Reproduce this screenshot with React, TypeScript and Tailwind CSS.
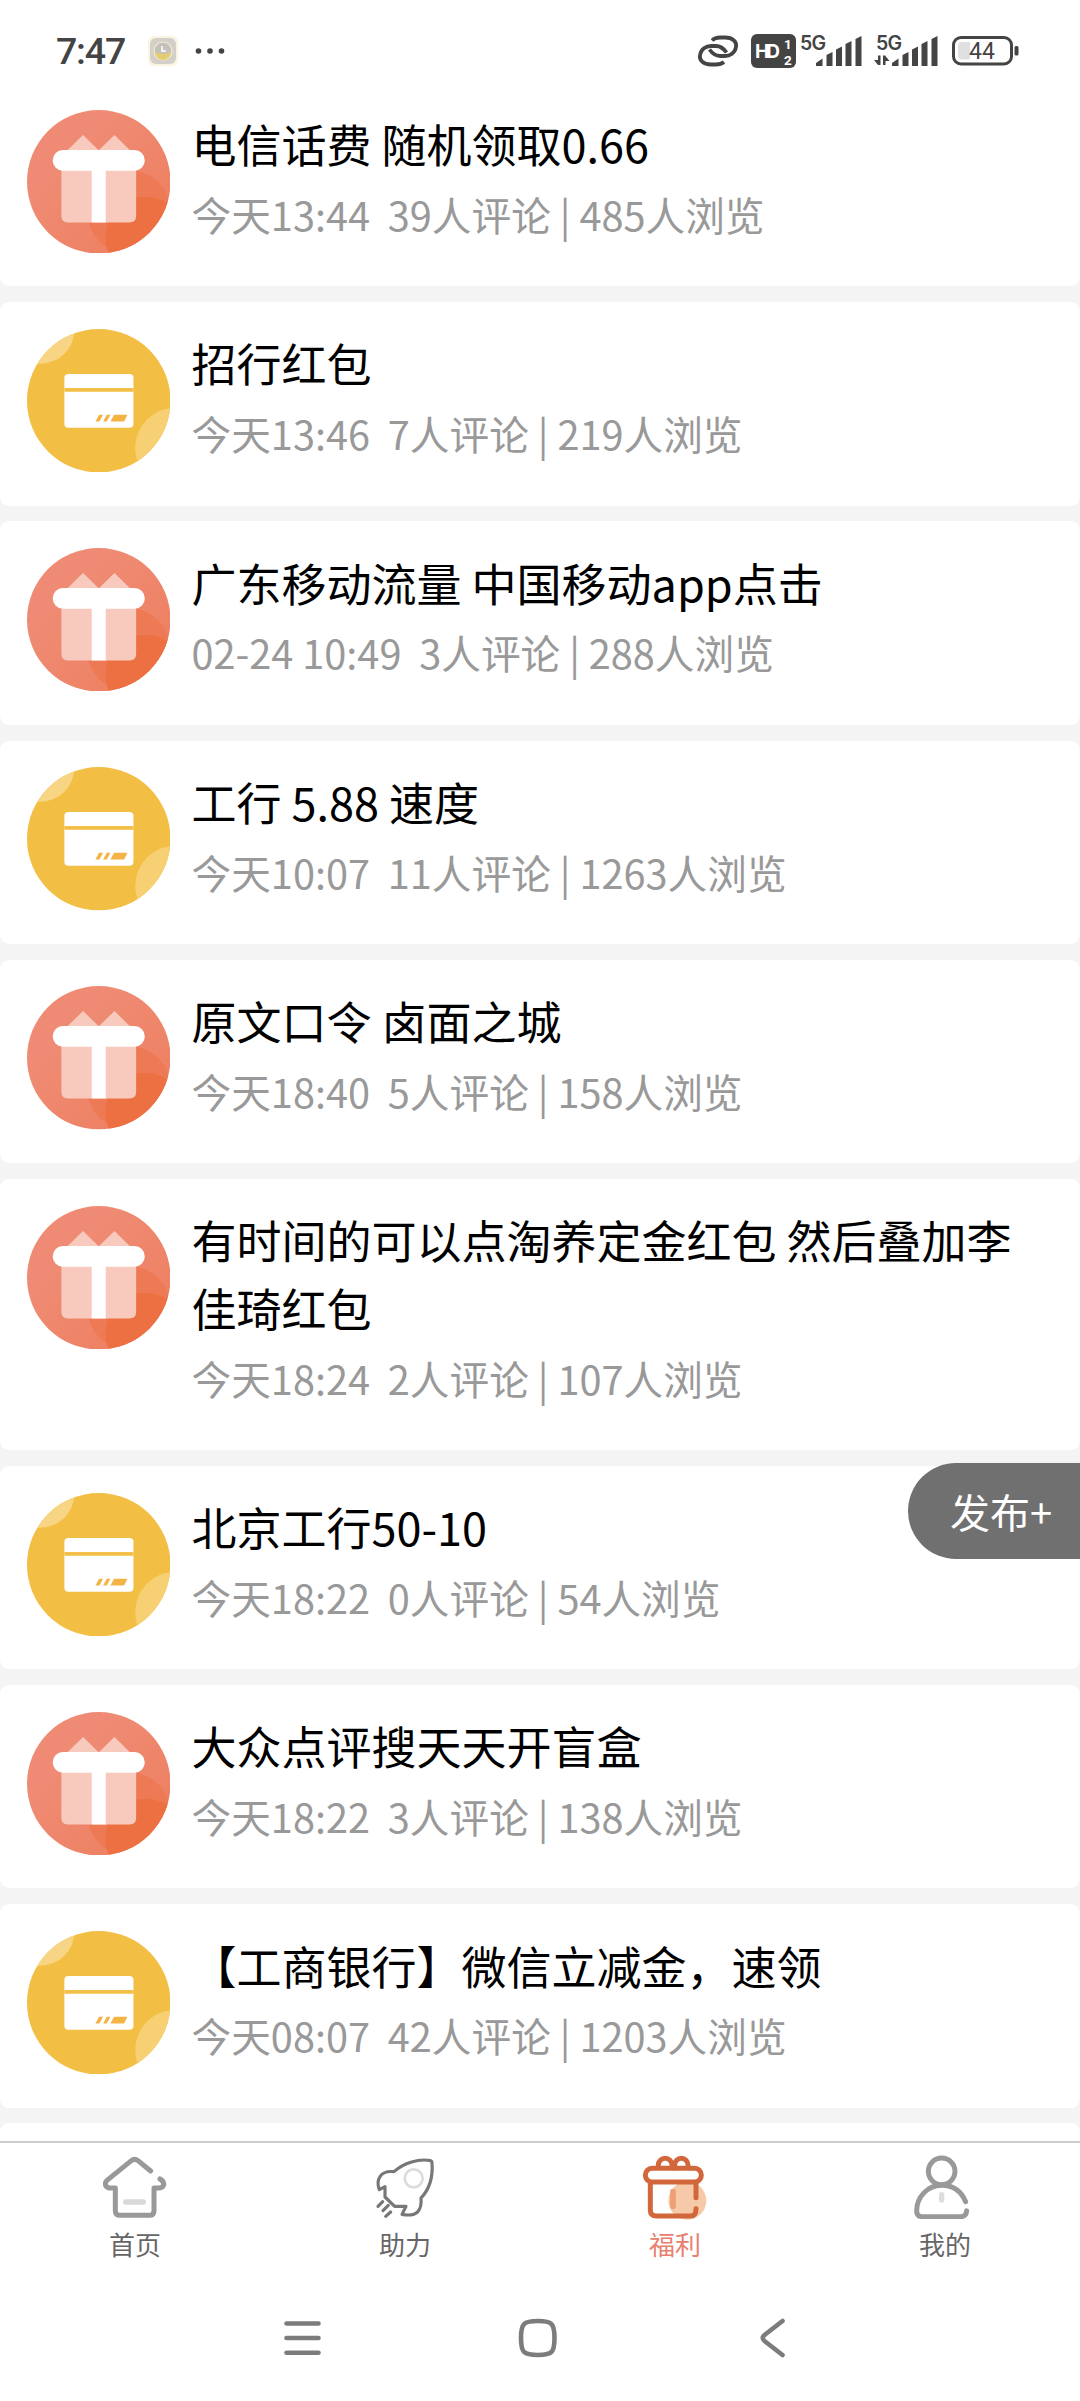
import React, { useState } from "react";

type PostType = "gift" | "card";

type Post = {
  id: number;
  type: PostType;
  title: string;
  time: string;
  comments: number;
  views: number;
};

const posts: Post[] = [
  { id: 1, type: "gift", title: "电信话费 随机领取0.66", time: "今天13:44", comments: 39, views: 485 },
  { id: 2, type: "card", title: "招行红包", time: "今天13:46", comments: 7, views: 219 },
  { id: 3, type: "gift", title: "广东移动流量 中国移动app点击", time: "02-24 10:49", comments: 3, views: 288 },
  { id: 4, type: "card", title: "工行 5.88 速度", time: "今天10:07", comments: 11, views: 1263 },
  { id: 5, type: "gift", title: "原文口令 卤面之城", time: "今天18:40", comments: 5, views: 158 },
  { id: 6, type: "gift", title: "有时间的可以点淘养定金红包 然后叠加李佳琦红包", time: "今天18:24", comments: 2, views: 107 },
  { id: 7, type: "card", title: "北京工行50-10", time: "今天18:22", comments: 0, views: 54 },
  { id: 8, type: "gift", title: "大众点评搜天天开盲盒", time: "今天18:22", comments: 3, views: 138 },
  { id: 9, type: "card", title: "【工商银行】微信立减金，速领", time: "今天08:07", comments: 42, views: 1203 },
];

const GiftBadge = () => (
  <svg viewBox="0 0 430 430" className="size-[143.5px] shrink-0">
    <defs>
      <clipPath id="giftClip">
        <circle cx="215" cy="215" r="215" />
      </clipPath>
      <linearGradient id="giftGlow" x1="0" y1="0" x2="1" y2="1">
        <stop offset="0.3" stopColor="#ef8b74" />
        <stop offset="1" stopColor="#ed7d5c" />
      </linearGradient>
    </defs>
    <g clipPath="url(#giftClip)">
      <rect width="430" height="430" fill="url(#giftGlow)" />
      <circle cx="305" cy="305" r="125" fill="#ed7a54" />
      <circle cx="355" cy="380" r="120" fill="#ed7042" />
    </g>
    <path d="M168 75 L214 120 H122 Z M262 75 L308 120 H216 Z" fill="#f8cabe" strokeLinejoin="round" />
    <path d="M103 180 H327 V317 Q327 337 307 337 H123 Q103 337 103 317 Z" fill="#f8cabe" />
    <rect x="194" y="170" width="42" height="167" fill="#fff" />
    <rect x="77" y="120" width="276" height="62" rx="31" fill="#fff" />
  </svg>
);

const CardBadge = () => (
  <svg viewBox="0 0 430 430" className="size-[143.5px] shrink-0">
    <defs>
      <clipPath id="cardClip">
        <circle cx="215" cy="215" r="215" />
      </clipPath>
    </defs>
    <g clipPath="url(#cardClip)">
      <rect width="430" height="430" fill="#f3be44" />
      <circle cx="40" cy="2" r="102" fill="#f7d584" />
      <circle cx="445" cy="357" r="121" fill="#f6d073" />
    </g>
    <rect x="112" y="135" width="207" height="161" rx="12" fill="#fff" />
    <rect x="112" y="177" width="207" height="11" fill="#f3be44" />
    <path
      d="M205 277 L216 257 H228 L217 277 Z M228 277 L239 257 H250 L239 277 Z M250 277 L261 257 H301 L291 277 Z"
      fill="#f3b445"
    />
  </svg>
);

const HomeIcon = () => (
  <svg viewBox="0 0 192 192" className="size-16" fill="none" strokeLinecap="round" strokeLinejoin="round">
    <path
      d="M143 48 L105 17 Q95 9 85 17 L11 77 Q4 86 9 93 Q13 99 22 99 H37 V167 Q37 181 51 181 H139 Q153 181 153 167 V99 H166 Q179 99 182 90 Q184 80 171 72"
      stroke="#999"
      strokeWidth="15"
    />
    <path d="M68 141 H121" stroke="#d9d9d9" strokeWidth="16" />
  </svg>
);

const RocketIcon = () => (
  <svg viewBox="0 0 192 192" className="size-16" fill="none" strokeLinecap="round" strokeLinejoin="round">
    <path
      d="M63 50 C92 23 138 10 173 17 Q177 18 177 24 C180 65 168 104 144 129 C147 163 135 187 87 178 L99 154 H65 L36 126 V95 L19 104 C8 74 22 45 63 50 Z"
      stroke="#777"
      strokeWidth="9.5"
    />
    <circle cx="122" cy="70" r="27" stroke="#dcdcdc" strokeWidth="8" />
    <path d="M29 140 L15 154 M46 151 L30 167 M53 171 L38 184" stroke="#777" strokeWidth="9.5" />
  </svg>
);

const WelfareIcon = () => (
  <svg viewBox="0 0 192 192" className="size-16 overflow-visible" fill="none" strokeLinecap="round">
    <circle cx="133" cy="137" r="57" fill="#f6caa9" />
    <path d="M90 110 V154" stroke="#ee9f74" strokeWidth="17" />
    <g stroke="#d2673c" strokeWidth="15">
      <rect x="7" y="40" width="168" height="41" rx="20" />
      <path d="M46 36 V30 A20 20 0 0 1 87 30 Q87 36 91 38 Q95 36 95 30 A20 20 0 0 1 135 30 V36" />
      <path d="M22 84 V165 Q22 183 40 183 H143 Q159 183 159 161" />
      <path d="M159 84 V128" />
    </g>
  </svg>
);

const UserIcon = () => (
  <svg viewBox="0 0 192 192" className="size-16" fill="none" strokeLinecap="round">
    <g stroke="#999" strokeWidth="15">
      <circle cx="86" cy="49" r="40" />
      <path d="M158 140 C145 110 120 91 86 91 C44 91 11 126 11 167 Q11 185 28 185 H143 Q160 185 161 167" />
    </g>
    <path d="M86 119 V135" stroke="#ddd" strokeWidth="16" />
  </svg>
);

const SignalIcon = ({ arrows }: { arrows?: boolean }) => (
  <svg viewBox="0 0 70 40" className="h-10 w-[70px] overflow-visible" fill="#444">
    <text x="2" y="18.5" fontSize="19.5" fontWeight="600" fontFamily="Inter, sans-serif" textLength="26">
      5G
    </text>
    <path d="M18 35 V32 L24.5 27.5 V35 Z M28.5 35 V24 L34.5 21 V35 Z M38 35 V18.5 L44 15.5 V35 Z M47.5 35 V13 L53.5 10 V35 Z M57.5 35 V8 L63.5 5 V35 Z" />
    {arrows && <path d="M4 24.5 V34 H6.5 V24.5 Z M0 29 H4 V34 Z M9 24.5 V34 H11.5 V24.5 Z M11.5 25 L15.5 30 H11.5 Z" />}
  </svg>
);

const StatusBar = () => (
  <header className="flex h-[83px] shrink-0 items-start bg-white pt-[31px] text-[#444]">
    <span className="ml-[56px] w-[92px] font-[Roboto,sans-serif] text-[37.5px] leading-[40px] font-medium tracking-[-1.2px]">
      7:47
    </span>
    <svg viewBox="0 0 30 30" className="mt-[5px] size-[30px]">
      <rect width="30" height="30" rx="6" fill="#faf4e0" />
      <rect x="2" y="2" width="26" height="26" rx="6" fill="#d3d0ca" />
      <circle cx="15" cy="15" r="9" fill="#c4c1ba" stroke="#f5eccb" strokeWidth="1.2" />
      <path d="M7 16 Q15 20 23 16 A8 8 0 0 1 7 16 Z" fill="#e3cc72" />
      <path d="M14 10 V15 H18" fill="none" stroke="#fff" strokeWidth="1.5" />
    </svg>
    <svg viewBox="0 0 30 8" className="mt-[15.5px] ml-[17px] h-2 w-[30px]" fill="#444">
      <circle cx="3.5" cy="4" r="2.8" />
      <circle cx="15" cy="4" r="2.8" />
      <circle cx="26.5" cy="4" r="2.8" />
    </svg>
    <svg viewBox="0 0 42 34" className="mt-[3px] ml-auto h-[34px] w-[42px]" fill="none" stroke="#444" strokeWidth="3.8">
      <path d="M15 6.5 Q18 3.5 23 3.5 H28 C36 3.5 40 8 39 13 C38 19 33 22 28 22 H23 C18 22 15 19 12.5 15.5" />
      <path d="M27 28 Q24 30.5 19 30.5 H14 C6 30.5 2 26 3 21 C4 15 9 12 14 12 H19 C24 12 27 15 29.5 18.5" />
    </svg>
    <svg viewBox="0 0 45 34" className="mt-[3px] ml-[11.5px] h-[34px] w-[45px]">
      <rect width="45" height="34" rx="6" fill="#444" />
      <g fill="#fff" fontWeight="700">
        <text x="4" y="24" fontSize="19" textLength="25" fontFamily="Inter, sans-serif">HD</text>
        <text x="33" y="15" fontSize="13.5" fontFamily="Roboto, sans-serif">1</text>
        <text x="33" y="31" fontSize="13.5" fontFamily="Roboto, sans-serif">2</text>
      </g>
    </svg>
    <div className="ml-[2.5px]">
      <SignalIcon />
    </div>
    <div className="ml-[6px]">
      <SignalIcon arrows />
    </div>
    <svg viewBox="0 0 68 30" className="mt-[5px] mr-[60.3px] ml-[7.7px] h-[30px] w-[68px]">
      <rect x="1.5" y="1.5" width="58" height="26.5" rx="7.5" fill="none" stroke="#444" strokeWidth="3" />
      <path d="M10 6 H18 V23.5 H10 Q6 23.5 6 19.5 V10 Q6 6 10 6 Z" fill="#e0e0e0" />
      <rect x="62.5" y="10" width="4" height="9.5" rx="1.5" fill="#444" />
      <text x="17" y="23" fontSize="23" fontFamily="Roboto, sans-serif" fill="#444" textLength="26">
        44
      </text>
    </svg>
  </header>
);

const PostItem = ({ post, first }: { post: Post; first?: boolean }) => (
  <li className={`flex bg-white pt-[26.6px] pb-[33.3px] pl-[26.5px] ${first ? "rounded-b-[9px]" : "rounded-[9px]"}`}>
    {post.type === "gift" ? <GiftBadge /> : <CardBadge />}
    <div className="ml-[21.5px] w-[850px] pt-[0.7px] pb-[9px]">
      <h2 className="text-[45px] leading-[67.8px] text-black">{post.title}</h2>
      <p className="mt-[6px] text-[39.7px] leading-[60px] whitespace-pre text-[#999]">
        {`${post.time}  ${post.comments}人评论 | ${post.views}人浏览`}
      </p>
    </div>
  </li>
);

const tabs = [
  { key: "home", label: "首页", icon: <HomeIcon /> },
  { key: "boost", label: "助力", icon: <RocketIcon /> },
  { key: "welfare", label: "福利", icon: <WelfareIcon /> },
  { key: "me", label: "我的", icon: <UserIcon /> },
];

const App = () => {
  const [active, setActive] = useState("welfare");

  return (
    <div className="relative flex h-[2401px] w-[1080px] flex-col overflow-hidden bg-white font-['Noto_Sans_CJK_SC',sans-serif]">
      <StatusBar />

      <main className="flex-1 overflow-hidden bg-[#f4f4f4]">
        <ul className="flex flex-col gap-[15.8px]">
          {posts.map((post, index) => (
            <PostItem key={post.id} post={post} first={index === 0} />
          ))}
          {/* next card, mostly hidden behind the tab bar */}
          <li className="h-[203px] rounded-[9px] bg-white" />
        </ul>
      </main>

      <nav className="grid h-[149px] shrink-0 grid-cols-4 border-t-2 border-[#ccc] bg-white">
        {tabs.map((tab) => (
          <button key={tab.key} className="flex flex-col items-center pt-3" onClick={() => setActive(tab.key)}>
            {tab.icon}
            <span
              className={`mt-[6px] text-[26px] leading-[38px] ${active === tab.key ? "text-[#e8806f]" : "text-[#666]"}`}
            >
              {tab.label}
            </span>
          </button>
        ))}
      </nav>

      <footer className="flex h-[111px] shrink-0 items-start bg-white pt-7 pl-[283.5px]">
        <svg
          viewBox="0 0 504 40"
          className="h-10 w-[504px]"
          fill="none"
          stroke="#7c7c7c"
          strokeLinecap="round"
          strokeLinejoin="round"
        >
          <path d="M2.5 5.5 H34.5 M2.5 20 H34.5 M2.5 34.7 H34.5" strokeWidth="4.6" />
          <path
            d="M254 3 C268 3 270.5 5.5 270.5 20 C270.5 34.5 268 37 254 37 C239.5 37 237 34.5 237 20 C237 5.5 239.5 3 254 3 Z"
            strokeWidth="4.6"
          />
          <path d="M498.5 3 L480.5 17 Q477 20 480.5 23 L498.5 37" strokeWidth="4.6" />
        </svg>
      </footer>

      <button className="absolute top-[1463px] right-0 h-24 w-[172px] rounded-l-full bg-[#707070] pl-[42px] text-left text-[40px] text-white">
        发布+
      </button>
    </div>
  );
};

export default App;
